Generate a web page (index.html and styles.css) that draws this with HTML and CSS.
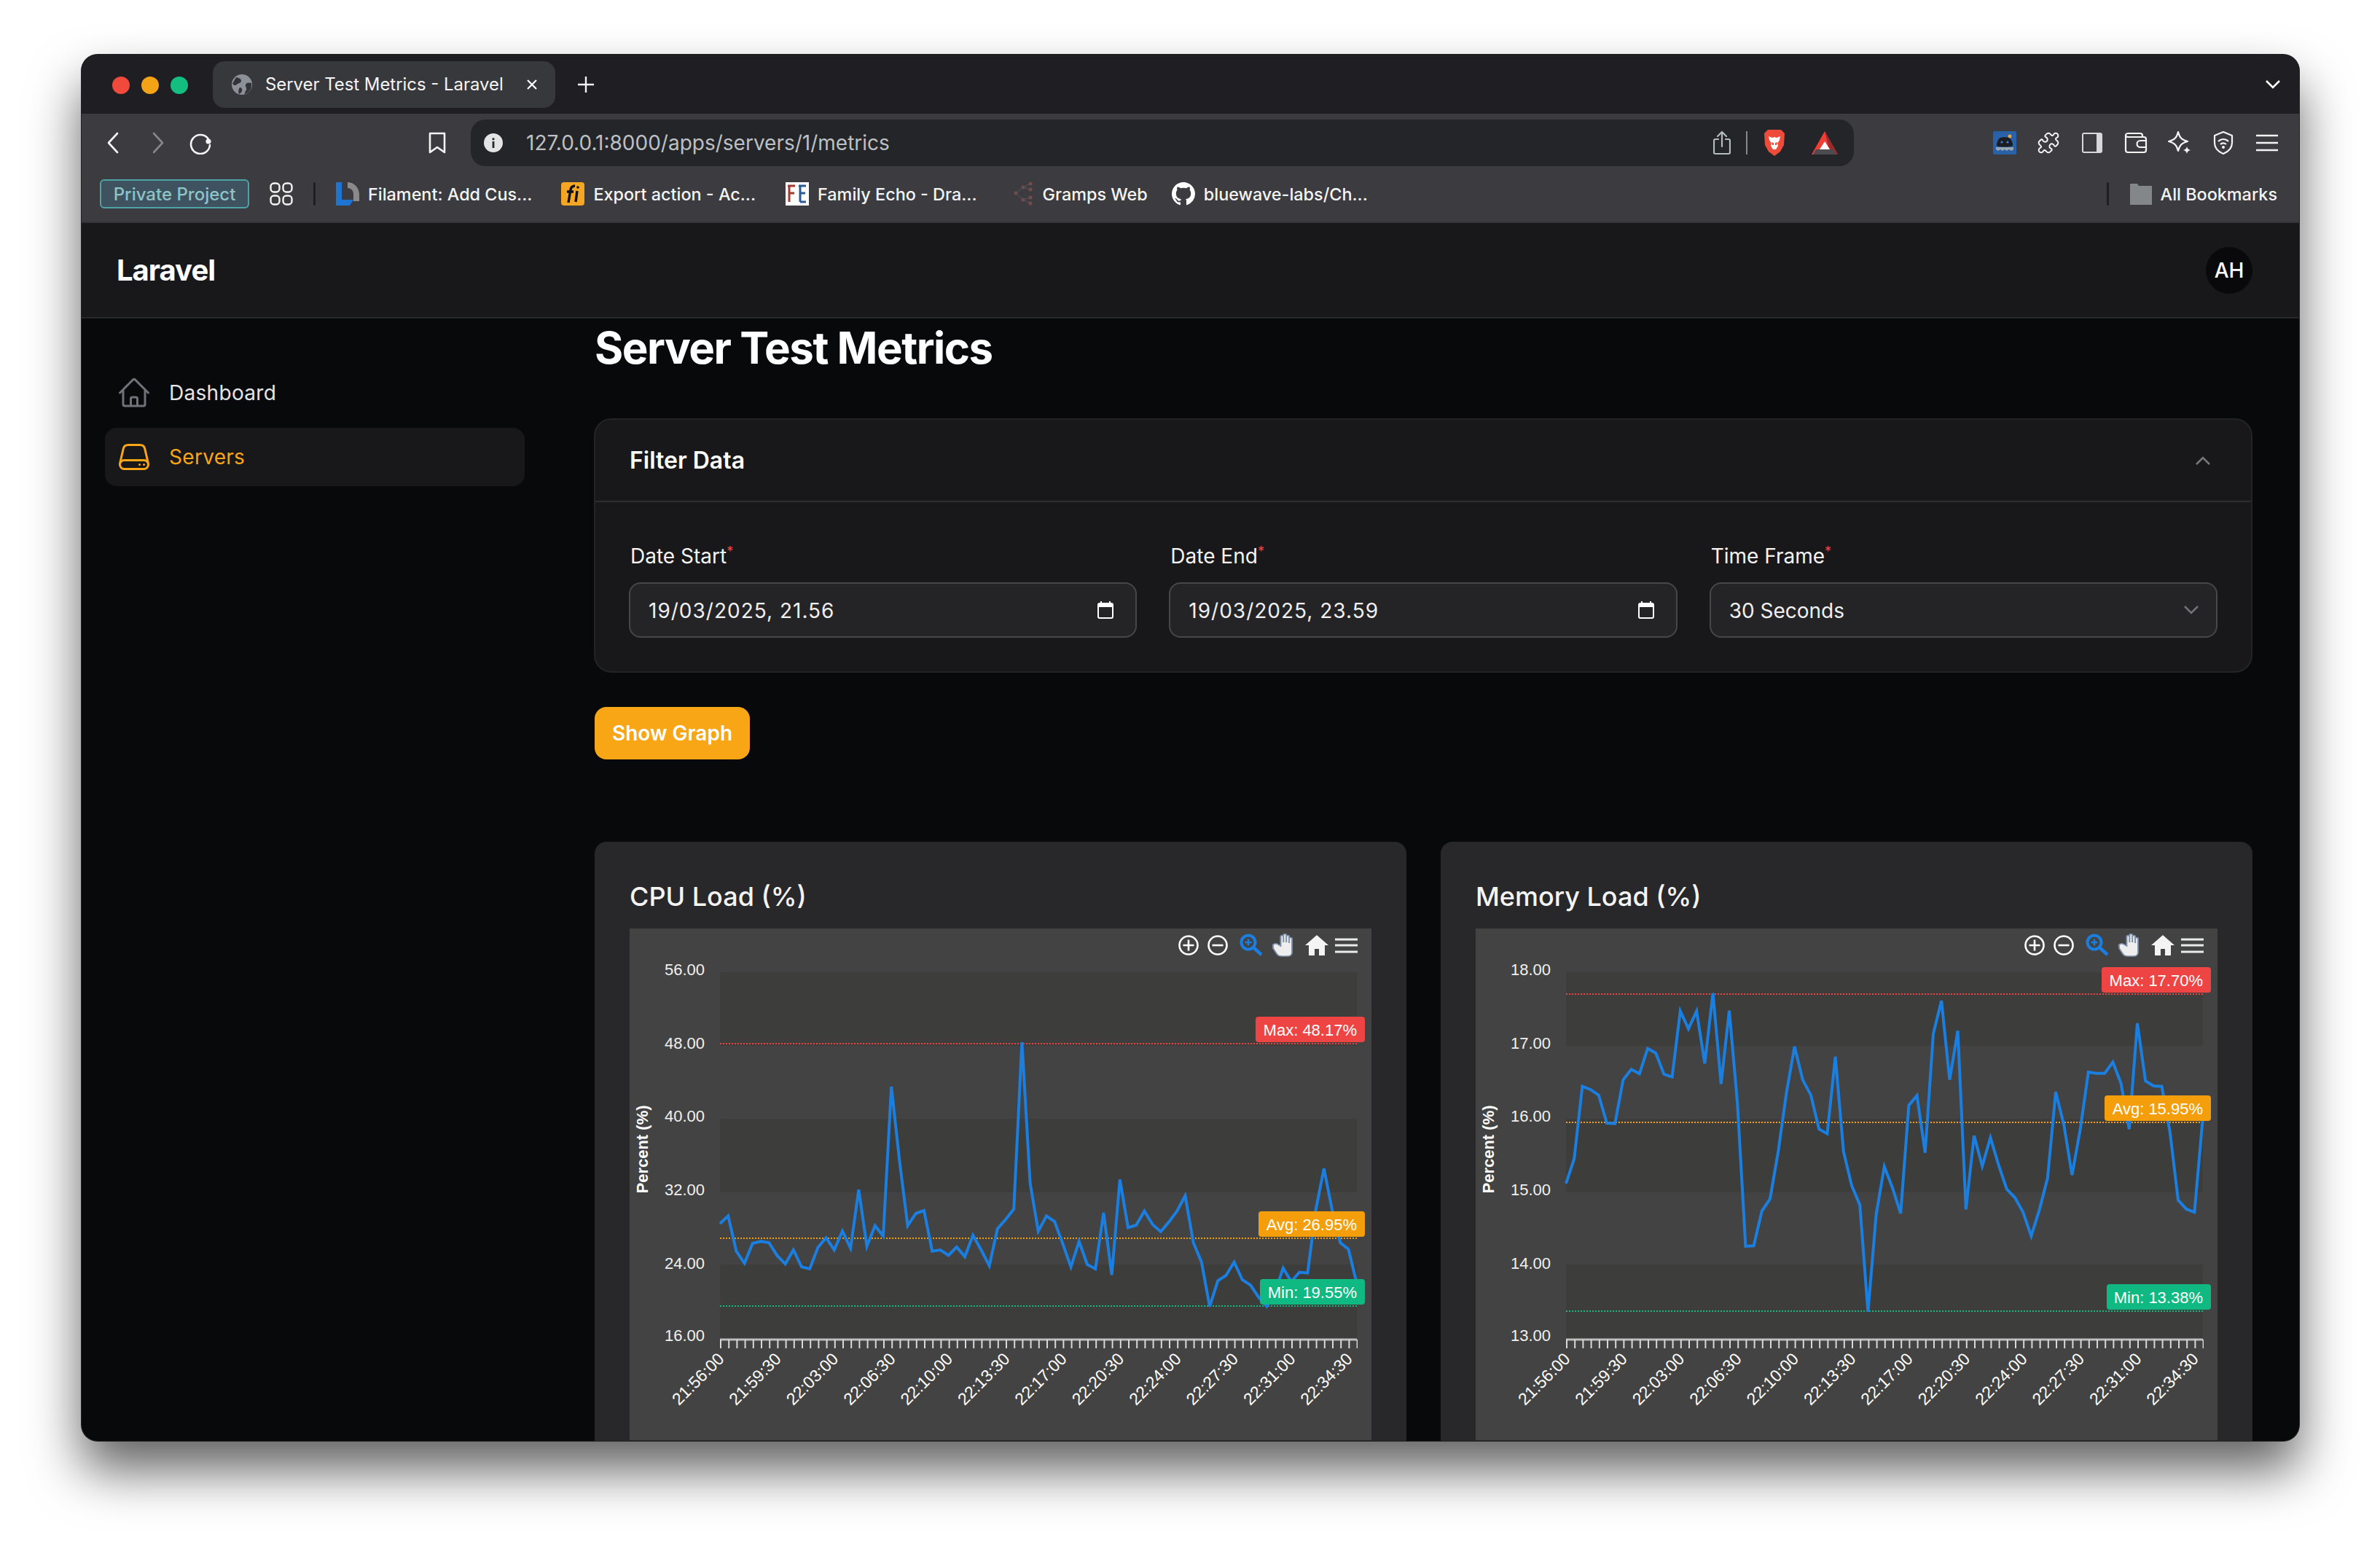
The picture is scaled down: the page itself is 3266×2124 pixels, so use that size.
FILE: index.html
```html
<!DOCTYPE html>
<html lang="en">
<head>
  <meta charset="UTF-8">
  <title>Server Test Metrics - Laravel</title>
  <link rel="stylesheet" href="styles.css">
</head>
<body>
  <div class="window">

    <!-- Browser chrome -->
    <div class="tabstrip">
      <span class="light red"></span><span class="light yellow"></span><span class="light green"></span>
      <div class="tab">
        <svg class="tab-globe" viewBox="0 0 28 28"><circle cx="14" cy="14" r="14" fill="#8b9196"/><path d="M6 4c4 1 7 2 7 5s-4 3-6 5-4 1-6-1zM27 12c-3-1-7-1-8 2s2 4 1 7-3 4-2 6c5-1 9-6 9-11z" fill="#33343a"/><path d="M11 18c2 0 4 2 3 5s-3 3-4 4c-1-2-1-7 1-9z" fill="#33343a"/></svg>
        <span class="tab-title">Server Test Metrics - Laravel</span>
        <svg class="tab-close" viewBox="0 0 16 16"><path d="M2 2l12 12M14 2L2 14" stroke="#fff" stroke-width="2.2" fill="none"/></svg>
      </div>
      <svg class="tab-new" viewBox="0 0 22 22"><path d="M11 0v22M0 11h22" stroke="#f4f4f5" stroke-width="2.4" fill="none"/></svg>
      <svg class="tab-menu" viewBox="0 0 20 12"><path d="M1 1l9 9 9-9" stroke="#fff" stroke-width="2.6" fill="none"/></svg>
    </div>

    <div class="toolbar">
      <div class="slot"><svg class="ic" viewBox="0 0 32 32"><path d="M21 3L9 16l12 13" stroke="#f4f4f5" stroke-width="2.6" fill="none" stroke-linecap="round" stroke-linejoin="round"/></svg></div>
      <div class="slot"><svg class="ic" viewBox="0 0 32 32"><path d="M11 3l12 13-12 13" stroke="#85868a" stroke-width="2.6" fill="none" stroke-linecap="round" stroke-linejoin="round"/></svg></div>
      <div class="slot"><svg class="ic" viewBox="0 0 32 32"><path d="M26 11A13 13 0 1 0 28 19" stroke="#f4f4f5" stroke-width="2.6" fill="none" stroke-linecap="round"/><circle cx="26" cy="14" r="3.6" fill="#f4f4f5"/></svg></div>
      <div class="slot slot-mark"><svg class="ic" viewBox="0 0 32 32"><path d="M6 3h20v26l-10-7-10 7z" stroke="#f4f4f5" stroke-width="2.6" fill="none" stroke-linejoin="round"/></svg></div>

      <div class="urlbar">
        <svg class="url-info" viewBox="0 0 26 26"><circle cx="13" cy="13" r="13" fill="#e4e4e7"/><rect x="11.6" y="11" width="2.8" height="9" fill="#25262a"/><rect x="11.6" y="6.4" width="2.8" height="2.8" fill="#25262a"/></svg>
        <span class="url-text">127.0.0.1:8000/apps/servers/1/metrics</span>
        <svg class="url-share" viewBox="0 0 24 34"><path d="M7 12H3a2 2 0 0 0-2 2v16a2 2 0 0 0 2 2h18a2 2 0 0 0 2-2V14a2 2 0 0 0-2-2h-4M12 22V2M6 8l6-6 6 6" stroke="#b4bdbd" stroke-width="2.2" fill="none" stroke-linecap="round" stroke-linejoin="round"/></svg>
        <span class="url-sep"></span>
        <svg class="url-brave" viewBox="0 0 32 38"><path d="M7 1h18l5 5-1 16-5 9-8 6-8-6-5-9L2 6z" fill="#ef4b3a"/><path d="M8 10l5 2 3-1 3 1 5-2-1 5-3 5 1 3-3 5h-4l-3-5 1-3-3-5z" fill="#fff"/><path d="M12 18l3 1v3h-2zM20 18l-3 1v3h2z" fill="#ef4b3a"/></svg>
        <svg class="url-warn" viewBox="0 0 36 32"><path d="M18 0L36 32H0z" fill="#ee3e36"/><path d="M18 0l18 32H26z" fill="#9b2b2b"/><path d="M18 14l7 11H11z" fill="#fff"/><path d="M6 25h24l3 7H2z" fill="#4b4b50"/></svg>
      </div>

      <div class="extensions">
        <div class="slot"><svg class="ic" viewBox="0 0 32 32"><rect width="32" height="32" rx="2" fill="#2a62a8"/><path d="M5 20c0-5 2-9 5-11 3-1 9-1 12 0 3 2 5 6 5 11-3 2-19 2-22 0z" fill="#1c1d22"/><circle cx="23" cy="7" r="2.4" fill="#f0a73a"/><circle cx="12" cy="15" r="1.6" fill="#3a7fd0"/><circle cx="20" cy="15" r="1.6" fill="#3a7fd0"/><path d="M4 22h24v3l-3 2-3-2-3 2-3-2-3 2-3-2-3 2-3-2z" fill="#9aa6ad"/></svg></div>
        <div class="slot"><svg class="ic" viewBox="0 0 24 24"><path d="M19.439 7.85c-.049.322.059.648.289.878l1.568 1.568c.47.47.706 1.087.706 1.704s-.235 1.233-.706 1.704l-1.611 1.611a.98.98 0 0 1-.837.276c-.47-.07-.802-.48-.968-.925a2.501 2.501 0 1 0-3.214 3.214c.446.166.855.497.925.968a.979.979 0 0 1-.276.837l-1.61 1.61a2.404 2.404 0 0 1-1.705.707 2.402 2.402 0 0 1-1.704-.706l-1.568-1.568a1.026 1.026 0 0 0-.877-.29c-.493.074-.84.504-1.02.968a2.5 2.5 0 1 1-3.237-3.237c.464-.18.894-.527.967-1.02a1.026 1.026 0 0 0-.289-.877l-1.568-1.568A2.402 2.402 0 0 1 1.998 12c0-.617.236-1.234.706-1.704L4.23 8.77c.24-.24.581-.353.917-.303.515.077.877.528 1.073 1.01a2.5 2.5 0 1 0 3.259-3.259c-.482-.196-.933-.558-1.01-1.073-.05-.336.062-.676.303-.917l1.525-1.525A2.402 2.402 0 0 1 12 1.998c.617 0 1.234.236 1.704.706l1.568 1.568c.23.23.556.338.877.29.493-.074.84-.504 1.02-.968a2.5 2.5 0 1 1 3.237 3.237c-.464.18-.894.527-.967 1.02Z" stroke="#f4f4f5" stroke-width="1.5" fill="none"/></svg></div>
        <div class="slot"><svg class="ic" viewBox="0 0 32 32"><rect x="2" y="2" width="28" height="28" rx="3" fill="#d8d8da"/><rect x="4" y="4" width="18" height="24" fill="#3b3b40"/></svg></div>
        <div class="slot"><svg class="ic" viewBox="0 0 32 32"><path d="M26 8H5a3 3 0 0 1-3-3 3 3 0 0 1 3-2h17a3 3 0 0 1 3 3v2zM2 5v21a3 3 0 0 0 3 3h22a3 3 0 0 0 3-3V11a3 3 0 0 0-3-3h-2M30 13h-8a3.5 3.5 0 0 0 0 9h8" stroke="#f4f4f5" stroke-width="2.2" fill="none"/></svg></div>
        <div class="slot"><svg class="ic" viewBox="0 0 32 32"><path d="M14 1c2 8 5 11 13 13-8 2-11 5-13 13-2-8-5-11-13-13 8-2 11-5 13-13z" stroke="#f4f4f5" stroke-width="2.2" fill="none" stroke-linejoin="round"/><path d="M26 21c.6 2.800 1.700 3.900 5 5-3.300 1.100-4.400 2.200-5 5-.6-2.800-1.700-3.900-5-5 3.300-1.100 4.400-2.200 5-5z" fill="#f4f4f5"/></svg></div>
        <div class="slot"><svg class="ic" viewBox="0 0 32 32"><path d="M16 1l12 5v10c0 7-5 12-12 15C9 28 4 23 4 16V6z" stroke="#f4f4f5" stroke-width="2.2" fill="none" stroke-linejoin="round"/><path d="M9 14c4-4 10-4 14 0M12 18c2.500-2 5.500-2 8 0" stroke="#f4f4f5" stroke-width="2.2" fill="none"/><circle cx="16" cy="22" r="2" fill="#f4f4f5"/></svg></div>
        <div class="slot"><svg class="ic" viewBox="0 0 32 32"><path d="M1 6h30M1 16h30M1 26h30" stroke="#f4f4f5" stroke-width="2.4" fill="none"/></svg></div>
      </div>
    </div>

    <div class="bookmarks">
      <span class="pill">Private Project</span>
      <svg class="bm-groups" viewBox="0 0 32 32"><g fill="none" stroke="#f4f4f5" stroke-width="2.4"><rect x="1.500" y="1.500" width="12" height="12" rx="4.500"/><rect x="18.500" y="1.500" width="12" height="12" rx="4.500"/><rect x="1.500" y="18.500" width="12" height="12" rx="4.500"/><rect x="18.500" y="18.500" width="12" height="12" rx="4.500"/></g></svg>
      <span class="bm-sep"></span>
      <a class="bm bm-filament"><svg class="bm-icon" viewBox="0 0 32 32"><path d="M0 0h8v24h16l-5 8H0z" fill="#1d74d2"/><path d="M16 0c8 0 15 6 16 16v10h-8V16c0-4-3-8-8-8z" fill="#8a8a8a"/></svg>Filament: Add Cus...</a>
      <a class="bm bm-export"><svg class="bm-icon" viewBox="0 0 32 32"><rect width="32" height="32" rx="4" fill="#f5a623"/><path d="M10 28l3-18c1-4 3-5 6-5M8 13h9M22 12l-2 15" stroke="#111" stroke-width="3.400" fill="none"/><circle cx="23" cy="7" r="1.800" fill="#111"/></svg>Export action - Ac...</a>
      <a class="bm bm-family"><svg class="bm-icon" viewBox="0 0 32 32"><rect width="32" height="32" fill="#fff"/><path d="M3 5h10M5 5v22M5 15h7" stroke="#a5392d" stroke-width="3" fill="none"/><path d="M28 5H18M20 5v22M20 15h7M20 27h8" stroke="#2a5a94" stroke-width="3" fill="none"/></svg>Family Echo - Dra...</a>
      <a class="bm bm-gramps"><svg class="bm-icon bm-small" viewBox="0 0 30 32"><g fill="#7a4a4a"><circle cx="5" cy="15" r="2.500"/><circle cx="15" cy="7" r="2.500"/><circle cx="25" cy="2" r="2.500"/><circle cx="25" cy="10" r="2.500"/><circle cx="15" cy="24" r="2.500"/><circle cx="25" cy="21" r="2.500"/><circle cx="25" cy="29" r="2.500"/></g><path d="M5 15l10-8 10-5M15 7l10 3M5 15l10 9 10-3M15 24l10 5" stroke="#55555a" fill="none"/></svg>Gramps Web</a>
      <a class="bm"><svg class="bm-icon" viewBox="0 0 16 16"><path fill="#fff" d="M8 0C3.580 0 0 3.580 0 8c0 3.540 2.290 6.530 5.470 7.590.4.070.55-.17.55-.38 0-.19-.01-.82-.01-1.490-2.010.37-2.530-.49-2.690-.94-.09-.23-.48-.94-.82-1.130-.28-.15-.68-.52-.01-.53.63-.01 1.080.58 1.230.82.720 1.210 1.870.870 2.330.660.070-.52.280-.870.510-1.070-1.780-.2-3.640-.890-3.640-3.950 0-.870.310-1.590.820-2.150-.080-.2-.36-1.020.080-2.120 0 0 .670-.210 2.200.820.640-.180 1.320-.270 2-.270s1.360.090 2 .270c1.530-1.040 2.200-.820 2.200-.820.440 1.100.160 1.920.080 2.120.510.560.820 1.270.820 2.150 0 3.070-1.870 3.750-3.650 3.950.290.250.540.730.540 1.480 0 1.070-.010 1.930-.010 2.200 0 .210.150.460.550.380A8.013 8.013 0 0 0 16 8c0-4.420-3.580-8-8-8z"/></svg>bluewave-labs/Ch...</a>
      <span class="bm-sep bm-sep-end"></span>
      <a class="bm bm-all"><svg class="bm-icon bm-small" viewBox="0 0 30 32"><path d="M0 2h10l2 3h18v26H0z" fill="#84878a"/></svg>All Bookmarks</a>
    </div>

    <!-- App -->
    <header class="topbar">
      <span class="brand">Laravel</span>
      <span class="avatar">AH</span>
    </header>

    <div class="layout">
      <aside class="sidebar">
        <a class="nav-item">
          <svg class="nav-icon" viewBox="0 0 24 24"><path d="M2.250 12l8.954-8.955c.44-.439 1.152-.439 1.591 0L21.750 12M4.500 9.750v10.125c0 .621.504 1.125 1.125 1.125H9.750v-4.875c0-.621.504-1.125 1.125-1.125h2.250c.621 0 1.125.504 1.125 1.125V21h4.125c.621 0 1.125-.504 1.125-1.125V9.750M8.250 21h8.250"/></svg>
          Dashboard
        </a>
        <a class="nav-item active">
          <svg class="nav-icon" viewBox="0 0 24 24"><path d="M21.750 17.250v-.228a4.500 4.500 0 00-.12-1.030l-2.268-9.640a3.375 3.375 0 00-3.285-2.602H7.923a3.375 3.375 0 00-3.285 2.602l-2.268 9.640a4.500 4.500 0 00-.12 1.030v.228m19.500 0a3 3 0 01-3 3H5.250a3 3 0 01-3-3m19.500 0a3 3 0 00-3-3H5.250a3 3 0 00-3 3m16.500 0h.008v.008h-.008v-.008zm-3 0h.008v.008h-.008v-.008z"/></svg>
          Servers
        </a>
      </aside>

      <main class="content">
        <h1>Server Test Metrics</h1>

        <section class="filter">
          <div class="filter-head">
            <h2>Filter Data</h2>
            <svg class="filter-toggle" viewBox="0 0 20 12"><path d="M1 11l9-9 9 9" stroke="#77777b" stroke-width="2.600" fill="none"/></svg>
          </div>
          <div class="filter-body">
            <div class="field">
              <label>Date Start<sup>*</sup></label>
              <div class="input"><span class="date-value">19/03/2025, 21.56</span>
                <svg class="cal" viewBox="0 0 22 24"><path d="M5 0v4M17 0v4" stroke="#fff" stroke-width="2"/><rect x="1" y="3" width="20" height="20" rx="2" fill="none" stroke="#fff" stroke-width="2"/><rect x="1" y="3" width="20" height="5" fill="#fff"/></svg>
              </div>
            </div>
            <div class="field">
              <label>Date End<sup>*</sup></label>
              <div class="input"><span class="date-value">19/03/2025, 23.59</span>
                <svg class="cal" viewBox="0 0 22 24"><path d="M5 0v4M17 0v4" stroke="#fff" stroke-width="2"/><rect x="1" y="3" width="20" height="20" rx="2" fill="none" stroke="#fff" stroke-width="2"/><rect x="1" y="3" width="20" height="5" fill="#fff"/></svg>
              </div>
            </div>
            <div class="field">
              <label>Time Frame<sup>*</sup></label>
              <div class="input"><span>30 Seconds</span>
                <svg class="select-arrow" viewBox="0 0 20 12"><path d="M1 1l9 9 9-9" stroke="#71717a" stroke-width="2.600" fill="none"/></svg>
              </div>
            </div>
          </div>
        </section>

        <button class="show-graph">Show Graph</button>

        <div class="charts">
          <section class="card">
            <h3>CPU Load (%)</h3>
            <svg class="chart" viewBox="0 0 1018 702">
              <defs>
                <g id="chart-tools">
                  <g fill="none" stroke="#fff" stroke-width="2.600">
                    <circle cx="767" cy="23" r="12.500"/><path d="M767 15.500v15M759.500 23h15"/>
                    <circle cx="807" cy="23" r="12.500"/><path d="M799.500 23h15"/>
                  </g>
                  <g fill="none" stroke="#1a7fe0">
                    <circle cx="849" cy="19" r="9.500" stroke-width="4"/><path d="M856 26l11 10" stroke-width="4.500"/><path d="M849 14.500v9M844.500 19h9" stroke-width="2.400"/>
                  </g>
                  <path transform="translate(896 23) scale(1.300 1) translate(-896 -23)" d="M886 27l4 8c1 2 3 3 5 3h6c3 0 5-2 5-5V14c0-2-3-2-3 0v6-9c0-2-3-2-3 0v8-10c0-2-3-2-3 0v10-8c0-2-3-2-3 0v13l-4-3c-2-1-5 1-4 3z" fill="#eee" stroke="#7c8fa8" stroke-width="1.500"/>
                  <path d="M943 9l-16 14h5v14h8v-9h6v9h8V23h5z" fill="#f4f4f4"/>
                  <path d="M968 15h31M968 23h31M968 32h31" stroke="#e8eceb" stroke-width="3.200"/>
                </g>
                <g id="chart-frame">
                  <rect class="band" x="124" y="60" width="874" height="101"/>
                  <rect class="band" x="124" y="261" width="874" height="101"/>
                  <rect class="band" x="124" y="461" width="874" height="103"/>
                  <line class="axis" x1="124" y1="564" x2="998" y2="564"/>
                  <line class="ticks" x1="124" y1="570" x2="999" y2="570"/>
                  <text class="axis-title" transform="translate(25,303) rotate(-90)">Percent (%)</text>
                  <g class="x-labels">
                    <text transform="translate(131,592) rotate(-45)">21:56:00</text>
                    <text transform="translate(209.400,592) rotate(-45)">21:59:30</text>
                    <text transform="translate(287.800,592) rotate(-45)">22:03:00</text>
                    <text transform="translate(366.200,592) rotate(-45)">22:06:30</text>
                    <text transform="translate(444.600,592) rotate(-45)">22:10:00</text>
                    <text transform="translate(523,592) rotate(-45)">22:13:30</text>
                    <text transform="translate(601.400,592) rotate(-45)">22:17:00</text>
                    <text transform="translate(679.800,592) rotate(-45)">22:20:30</text>
                    <text transform="translate(758.200,592) rotate(-45)">22:24:00</text>
                    <text transform="translate(836.600,592) rotate(-45)">22:27:30</text>
                    <text transform="translate(915,592) rotate(-45)">22:31:00</text>
                    <text transform="translate(993.400,592) rotate(-45)">22:34:30</text>
                  </g>
                </g>
              </defs>
              <use href="#chart-tools"/>
              <use href="#chart-frame"/>
              <g class="y-labels">
                <text x="103" y="64">56.00</text><text x="103" y="165">48.00</text><text x="103" y="265">40.00</text>
                <text x="103" y="366">32.00</text><text x="103" y="467">24.00</text><text x="103" y="566">16.00</text>
              </g>
              <line class="ref ref-max" x1="124" y1="158" x2="998" y2="158"/>
              <line class="ref ref-avg" x1="124" y1="425" x2="998" y2="425"/>
              <line class="ref ref-min" x1="124" y1="518" x2="998" y2="518"/>
              <polyline class="series" transform="translate(124 326) scale(11.200 0.3333)" points="0,237 1,205 2,350 3,400 4,318 5,310 6,315 7,368 8,403 9,345 10,415 11,423 12,335 13,295 14,345 15,267 16,338 17,97 18,330 19,245 20,288 21,-327 22,-21 23,245 24,195 25,183 26,350 27,345 28,367 29,333 30,373 31,285 32,345 33,410 34,258 35,220 36,177 37,-510 38,70 39,268 40,205 41,228 42,320 43,415 44,310 45,405 46,423 47,192 48,448 49,55 50,253 51,243 52,185 53,240 54,270 55,230 56,185 57,122 58,315 59,395 60,578 61,472 62,450 63,395 64,468 65,490 66,540 67,578 68,520 69,420 70,475 71,437 72,440 73,180 74,10 75,180 76,315 77,342 78,480"/>
              <g class="tag tag-max"><rect x="859" y="121" width="150" height="35" rx="4"/><text x="998" y="147">Max: 48.17%</text></g>
              <g class="tag tag-avg"><rect x="863" y="388" width="146" height="35" rx="4"/><text x="998" y="414">Avg: 26.95%</text></g>
              <g class="tag tag-min"><rect x="865" y="481" width="144" height="35" rx="4"/><text x="998" y="507">Min: 19.55%</text></g>
            </svg>
          </section>

          <section class="card">
            <h3>Memory Load (%)</h3>
            <svg class="chart" viewBox="0 0 1018 702">
              <use href="#chart-tools"/>
              <use href="#chart-frame"/>
              <g class="y-labels">
                <text x="103" y="64">18.00</text><text x="103" y="165">17.00</text><text x="103" y="265">16.00</text>
                <text x="103" y="366">15.00</text><text x="103" y="467">14.00</text><text x="103" y="566">13.00</text>
              </g>
              <line class="ref ref-max" x1="124" y1="90" x2="998" y2="90"/>
              <line class="ref ref-avg" x1="124" y1="266" x2="998" y2="266"/>
              <line class="ref ref-min" x1="124" y1="525" x2="998" y2="525"/>
              <polyline class="series" transform="translate(124 -94) scale(11.200 0.3333)" points="0,1332 1,1230 2,932 3,945 4,968 5,1083 6,1085 7,905 8,862 9,880 10,776 11,795 12,882 13,893 14,622 15,695 16,622 17,838 18,548 19,922 20,620 21,1000 22,1590 23,1588 24,1445 25,1395 26,1200 27,960 28,768 29,905 30,968 31,1108 32,1127 33,810 34,1200 35,1340 36,1420 37,1860 38,1460 39,1262 40,1350 41,1455 42,1010 43,970 44,1205 45,715 46,580 47,905 48,703 49,1438 50,1135 51,1260 52,1143 53,1255 54,1355 55,1390 56,1450 57,1548 58,1440 59,1310 60,955 61,1090 62,1297 63,1110 64,873 65,878 66,878 67,832 68,920 69,1108 70,672 71,910 72,930 73,932 74,1120 75,1400 76,1437 77,1450 78,1070"/>
              <g class="tag tag-max"><rect x="859" y="53" width="150" height="35" rx="4"/><text x="998" y="79">Max: 17.70%</text></g>
              <g class="tag tag-avg"><rect x="863" y="229" width="146" height="35" rx="4"/><text x="998" y="255">Avg: 15.95%</text></g>
              <g class="tag tag-min"><rect x="866" y="488" width="143" height="35" rx="4"/><text x="998" y="514">Min: 13.38%</text></g>
            </svg>
          </section>
        </div>
      </main>
    </div>
  </div>
</body>
</html>
```

FILE: styles.css
```css
* { box-sizing: border-box; }
html, body { margin: 0; height: 100%; overflow: hidden; }
body { background: #fff; font-family: Inter, "Liberation Sans", sans-serif; color: #f4f4f5; }
a { color: inherit; text-decoration: none; }
svg { display: block; flex: none; }

.window { width: 3043px; height: 1902px; margin: 75px 0 0 112px; border-radius: 22px; overflow: hidden; display: flex; flex-direction: column; background: #08090b; box-shadow: 0 0 0 1px #222, 0 40px 70px rgba(0, 0, 0, 0.62); }

/* browser chrome */
.tabstrip { height: 81px; flex: none; background: #1f1f23; display: flex; align-items: center; padding-left: 42px; }
.light { width: 24px; height: 24px; border-radius: 50%; margin-right: 16px; margin-top: 2px; }
.red { background: #ef4a3c; }
.yellow { background: #f5a316; }
.green { background: #14bd80; }
.tab { width: 470px; height: 64px; margin-left: 18px; border-radius: 16px; background: #37383c; display: flex; align-items: center; padding-left: 26px; }
.tab-globe { width: 28px; height: 28px; }
.tab-title { margin-left: 18px; font-size: 23.900px; white-space: nowrap; width: 358px; }
.tab-close { width: 16px; height: 16px; }
.tab-new { width: 22px; height: 22px; margin-left: 31px; }
.tab-menu { width: 20px; height: 12px; margin-left: auto; margin-right: 26px; }

.toolbar { height: 80px; flex: none; background: #3b3b40; display: flex; align-items: flex-start; padding: 8px 14px 0; }
.slot { width: 60px; height: 64px; display: flex; align-items: center; justify-content: center; }
.slot-mark { margin-left: 264px; }
.ic { width: 32px; height: 32px; }
.urlbar { width: 1898px; height: 64px; margin-left: 16px; border-radius: 20px; background: #242528; display: flex; align-items: center; padding-left: 18px; }
.url-info { width: 26px; height: 26px; }
.url-text { margin-left: 32px; font-size: 28px; color: #bcc0c4; white-space: nowrap; }
.url-share { width: 24px; height: 34px; margin-left: auto; }
.url-sep { width: 2px; height: 32px; background: #85888a; margin-left: 21px; }
.url-brave { width: 32px; height: 38px; margin-left: 21px; }
.url-warn { width: 36px; height: 32px; margin-left: 35px; margin-right: 22px; }
.extensions { margin-left: auto; display: flex; }

.bookmarks { height: 70px; flex: none; background: #3b3b40; border-bottom: 2px solid #343438; display: flex; align-items: center; padding: 0 30px 8px 25px; font-size: 23.400px; font-weight: 500; }
.pill { width: 205px; height: 40px; border: 2px solid #4fa3a5; border-radius: 6px; background: #3f5260; color: #8cc4c8; font-size: 24px; display: flex; align-items: center; justify-content: center; white-space: nowrap; }
.bm-groups { width: 32px; height: 32px; margin-left: 28px; }
.bm-sep { width: 3px; height: 32px; border-radius: 2px; background: #1f1f23; margin: 0 28px; }
.bm { display: flex; align-items: center; gap: 12px; white-space: nowrap; }
.bm-icon { width: 32px; height: 32px; }
.bm-small { width: 30px; }
.bm-filament { margin-right: 40px; }
.bm-export { margin-right: 41px; }
.bm-family { margin-right: 48px; }
.bm-gramps { margin-right: 33px; }
.bm-sep-end { margin: 0 29px 0 auto; }

/* app */
.topbar { height: 131px; flex: none; background: #18181b; border-bottom: 2px solid #27272a; display: flex; align-items: center; justify-content: space-between; padding: 0 64px 0 48px; }
.brand { font-size: 40px; font-weight: 700; letter-spacing: -1px; color: #fff; }
.avatar { width: 64px; height: 64px; border-radius: 50%; background: #09090b; display: flex; align-items: center; justify-content: center; font-size: 28px; font-weight: 500; color: #fff; }

.layout { flex: 1; min-height: 0; display: flex; }
.sidebar { width: 640px; flex: none; padding: 62px 32px 0; display: flex; flex-direction: column; gap: 8px; }
.nav-item { height: 80px; width: 576px; border-radius: 16px; display: flex; align-items: center; gap: 24px; padding-left: 16px; font-size: 28px; font-weight: 400; letter-spacing: 0.3px; color: #e4e4e7; }
.nav-icon { width: 48px; height: 48px; fill: none; stroke: #71717a; stroke-width: 1.5; stroke-linecap: round; stroke-linejoin: round; }
.nav-item.active { background: #18181b; color: #f8a516; }
.nav-item.active .nav-icon { stroke: #f8a516; }

.content { flex: 1; min-width: 0; padding: 4px 64px 0; overflow: hidden; }
h1 { margin: 0 0 61px; font-size: 60px; line-height: 72px; font-weight: 700; letter-spacing: -1.5px; color: #fff; }

.filter { height: 349px; margin-left: -1px; border: 2px solid #242427; border-radius: 24px; background: #18181b; }
.filter-head { height: 113px; border-bottom: 2px solid #2e2e31; display: flex; align-items: center; justify-content: space-between; padding: 0 56px 0 47px; }
h2 { margin: 0; font-size: 32px; font-weight: 600; color: #fff; }
.filter-toggle { width: 20px; height: 12px; }
.filter-body { display: grid; grid-template-columns: repeat(3, 1fr); gap: 44px; padding: 54px 46px 0; }
.field label { display: block; font-size: 28px; line-height: 40px; font-weight: 400; color: #f4f4f5; margin-bottom: 16px; padding-left: 2px; }
.field sup { color: #ef4444; font-size: 18px; line-height: 0; vertical-align: 10px; }
.input { height: 76px; border: 2px solid #47474b; border-radius: 16px; background: #242427; display: flex; align-items: center; justify-content: space-between; padding: 2px 27px 0 25px; font-size: 28px; color: #f0f0f2; }
.date-value { letter-spacing: 1px; }
.cal { width: 22px; height: 24px; margin-right: 3px; margin-top: -2px; }
.select-arrow { width: 20px; height: 12px; margin-right: -3px; margin-top: -2px; }

.show-graph { display: block; width: 213px; height: 72px; margin-top: 47px; border: 0; border-radius: 16px; background: #f8a516; color: #fff; font: 600 28px Inter, sans-serif; padding: 0; }

.charts { display: grid; grid-template-columns: repeat(2, 1fr); gap: 47px; margin-top: 113px; }
.card { border-radius: 16px 16px 0 0; background: #28282b; padding: 47px 48px 0; height: 900px; }
h3 { margin: 0 0 16px; font-size: 36px; line-height: 56px; font-weight: 500; color: #f4f4f5; }
.chart { width: 1018px; height: 702px; background: #434343; font-family: "Liberation Sans", Arial, sans-serif; }

.band { fill: #3d3d3b; }
.axis { stroke: #bdbdbd; stroke-width: 3; }
.ticks { stroke: #d8d8d8; stroke-width: 12; stroke-dasharray: 2 9.200; }
.axis-title { fill: #fff; font-size: 22px; font-weight: 700; text-anchor: middle; }
.x-labels text { fill: #fff; font-size: 23px; text-anchor: end; }
.y-labels text { fill: #f0f0f0; font-size: 22px; text-anchor: end; }
.ref { stroke-width: 2; stroke-dasharray: 2 2; }
.ref-max { stroke: #ef4444; }
.ref-avg { stroke: #f59e0b; }
.ref-min { stroke: #10b981; }
.series { fill: none; stroke: #1a7fe0; stroke-width: 4; vector-effect: non-scaling-stroke; }
.tag text { fill: #fff; font-size: 22px; text-anchor: end; }
.tag-max rect { fill: #ef4444; }
.tag-avg rect { fill: #f59e0b; }
.tag-min rect { fill: #10b981; }
```
